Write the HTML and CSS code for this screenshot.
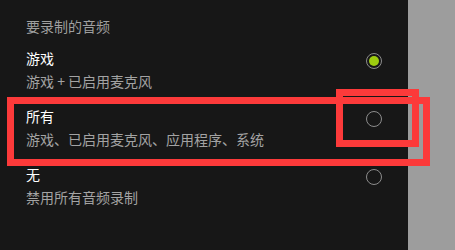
FILE: index.html
```html
<!DOCTYPE html>
<html lang="zh-CN">
<head>
<meta charset="utf-8">
<link rel="stylesheet" href="styles.css">
</head>
<body>
<div class="screen">
  <div class="panel">
    <div class="header">要录制的音频</div>
    <div class="options">
      <div class="option">
        <div class="text">
          <div class="title">游戏</div>
          <div class="sub">游戏 + 已启用麦克风</div>
        </div>
        <span class="radio checked"></span>
      </div>
      <div class="option">
        <div class="text">
          <div class="title">所有</div>
          <div class="sub">游戏、已启用麦克风、应用程序、系统</div>
        </div>
        <span class="radio"></span>
      </div>
      <div class="option">
        <div class="text">
          <div class="title">无</div>
          <div class="sub">禁用所有音频录制</div>
        </div>
        <span class="radio"></span>
      </div>
    </div>
  </div>
  <div class="side"></div>
  <div class="mark mark-big"></div>
  <div class="mark mark-small"></div>
</div>
</body>
</html>
```

FILE: styles.css
```css
html, body {
  margin: 0;
  padding: 0;
  background: #171717;
}
.screen {
  position: relative;
  display: flex;
  width: 455px;
  height: 250px;
  overflow: hidden;
  font-family: "Noto Sans CJK SC", "Noto Sans", sans-serif;
  font-size: 14px;
}
.panel {
  width: 408px;
  box-sizing: border-box;
  padding: 16px 26px 0 26px;
  background: #171717;
}
.side {
  flex: 1;
  background: #9d9d9d;
}
.header {
  line-height: 20px;
  color: #9f9f9f;
}
.options {
  margin-top: 12px;
  display: flex;
  flex-direction: column;
  gap: 15px;
}
.option {
  display: flex;
  justify-content: space-between;
  align-items: flex-start;
}
.text {
  display: flex;
  flex-direction: column;
  gap: 3px;
}
.title {
  line-height: 20px;
  color: #ffffff;
  font-weight: 400;
}
.sub {
  line-height: 20px;
  color: #a3a3a3;
}
.radio {
  margin-top: 5px;
  width: 16px;
  height: 16px;
  box-sizing: border-box;
  border: 1.5px solid #8c8c8c;
  border-radius: 50%;
  display: flex;
  align-items: center;
  justify-content: center;
}
.radio.checked::after {
  content: "";
  width: 10px;
  height: 10px;
  border-radius: 50%;
  background: #9dcc0f;
}
.mark {
  position: absolute;
  box-sizing: border-box;
  border: 7px solid #fc3a3a;
}
.mark-big {
  left: 7px;
  top: 97px;
  width: 423px;
  height: 69px;
}
.mark-small {
  left: 336px;
  top: 89px;
  width: 83px;
  height: 58px;
}
```
